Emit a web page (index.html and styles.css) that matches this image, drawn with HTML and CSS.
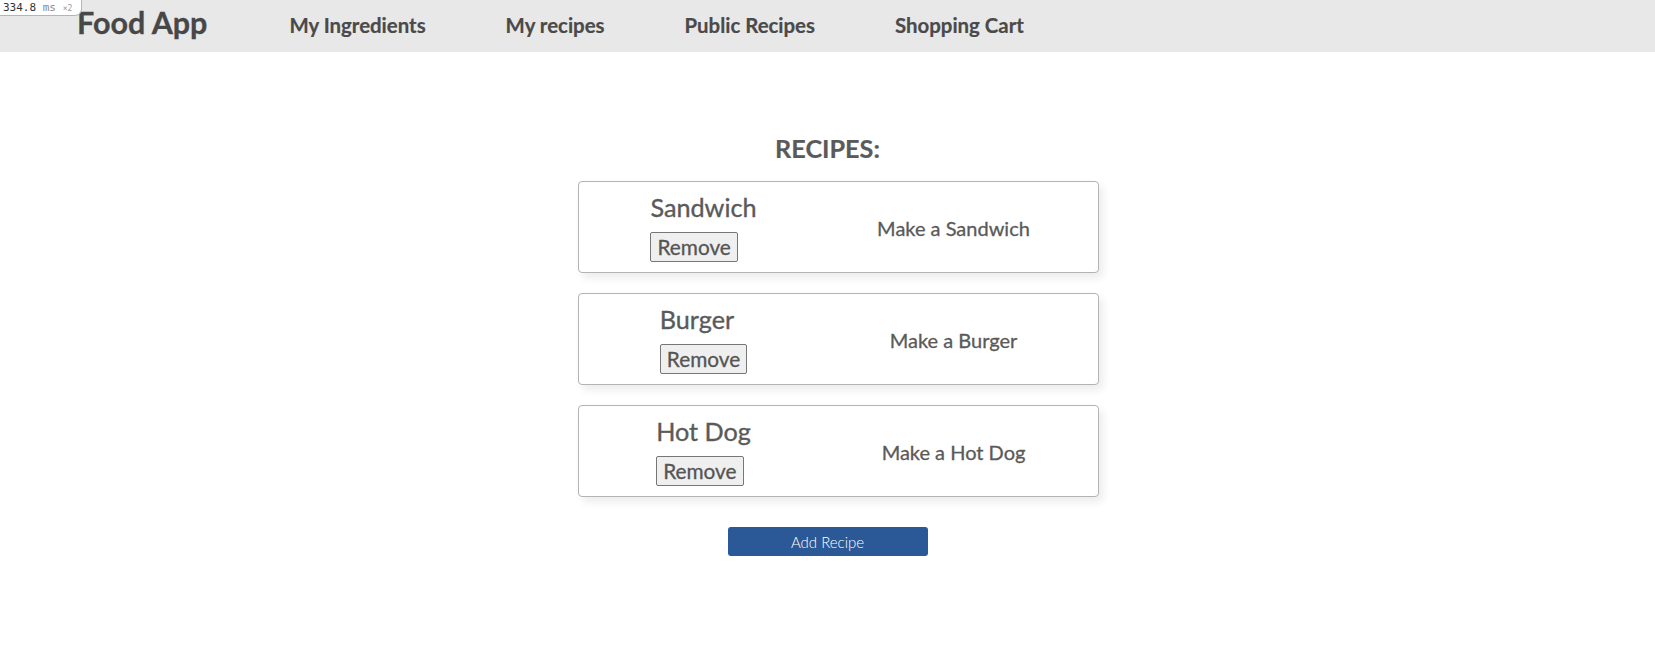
FILE: index.html
```html
<!DOCTYPE html>
<html lang="en">
<head>
<meta charset="utf-8">
<title>Food App</title>
<link rel="stylesheet" href="styles.css">
</head>
<body>
<div class="perf-badge"><span class="perf-num">334.8</span> <span class="perf-unit">ms</span> <span class="perf-mult">×2</span></div>
<header class="topbar">
  <div class="brand">Food App</div>
  <nav class="nav">
    <a class="nav-link" href="#">My Ingredients</a>
    <a class="nav-link" href="#">My recipes</a>
    <a class="nav-link" href="#">Public Recipes</a>
    <a class="nav-link" href="#">Shopping Cart</a>
  </nav>
</header>
<main class="content">
  <h2 class="section-title">RECIPES:</h2>
  <div class="recipe-list">
    <div class="recipe-card">
      <div class="recipe-main">
        <div class="recipe-name">Sandwich</div>
        <button class="remove-btn">Remove</button>
      </div>
      <div class="recipe-desc">Make a Sandwich</div>
    </div>
    <div class="recipe-card">
      <div class="recipe-main">
        <div class="recipe-name">Burger</div>
        <button class="remove-btn">Remove</button>
      </div>
      <div class="recipe-desc">Make a Burger</div>
    </div>
    <div class="recipe-card">
      <div class="recipe-main">
        <div class="recipe-name">Hot Dog</div>
        <button class="remove-btn">Remove</button>
      </div>
      <div class="recipe-desc">Make a Hot Dog</div>
    </div>
  </div>
  <div class="actions">
    <button class="add-btn">Add Recipe</button>
  </div>
</main>
</body>
</html>
```

FILE: styles.css
```css
html, body {
  margin: 0;
  padding: 0;
  background: #ffffff;
}

body {
  font-family: Lato, "Open Sans", sans-serif;
  color: #5a5a5a;
}

.perf-badge {
  position: absolute;
  top: 0;
  left: 0;
  height: 15px;
  padding: 0 9px 0 3px;
  background: #ffffff;
  border-right: 1px solid #b5b5b5;
  border-bottom: 1px solid #b5b5b5;
  border-bottom-right-radius: 7px;
  font-family: "DejaVu Sans Mono", monospace;
  font-size: 11px;
  line-height: 15px;
  color: #333;
  white-space: nowrap;
  z-index: 10;
}

.perf-unit {
  color: #888;
}

.perf-mult {
  color: #999;
  font-size: 8px;
}

.topbar {
  display: flex;
  align-items: flex-start;
  height: 52px;
  background: #e8e8e8;
  padding-left: 77px;
  gap: 82px;
  box-sizing: border-box;
}

.brand {
  font-size: 30.5px;
  font-weight: 700;
  color: #474747;
  padding-top: 4px;
  line-height: normal;
  -webkit-text-stroke: 0.3px #474747;
}

.nav {
  display: flex;
  gap: 80px;
  padding-top: 13px;
}

.nav-link {
  font-size: 20.4px;
  font-weight: 700;
  color: #4a4a4a;
  text-decoration: none;
  line-height: normal;
  -webkit-text-stroke: 0.2px #4a4a4a;
}

.content {
  width: 500px;
  margin: 0 auto;
}

.section-title {
  margin: 81px 0 18px;
  text-align: center;
  font-size: 25.2px;
  font-weight: 700;
  color: #5a5a5a;
  line-height: 30px;
  -webkit-text-stroke: 0.2px #5a5a5a;
}

.recipe-list {
  display: flex;
  flex-direction: column;
  gap: 20px;
}

.recipe-card {
  display: grid;
  grid-template-columns: 250px 250px;
  width: 500px;
  padding: 11px 19px 10px 0;
  border: 1px solid #b3b3b3;
  border-radius: 4px;
  box-shadow: 4px 5px 8px rgba(0, 0, 0, 0.08);
  background: #fff;
}

.recipe-main {
  justify-self: center;
  text-align: left;
}

.recipe-name {
  font-size: 25.2px;
  line-height: 29px;
  margin-bottom: 10px;
  color: #5a5a5a;
  -webkit-text-stroke: 0.35px #5a5a5a;
}

.remove-btn {
  font-family: Lato, sans-serif;
  font-size: 20.8px;
  line-height: 24px;
  color: #555;
  background: #efefef;
  border: 1px solid #767676;
  border-radius: 2px;
  padding: 2px 6px;
  margin: 0;
  -webkit-text-stroke: 0.3px #555;
}

.recipe-desc {
  align-self: center;
  justify-self: center;
  font-size: 20px;
  color: #5a5a5a;
  -webkit-text-stroke: 0.3px #5a5a5a;
}

.actions {
  display: flex;
  justify-content: center;
  margin-top: 30px;
}

.add-btn {
  width: 200px;
  height: 29px;
  background: #2b5896;
  color: #ffffff;
  border: none;
  border-radius: 3px;
  font-family: Lato, sans-serif;
  font-size: 15px;
  font-weight: 300;
}
```
